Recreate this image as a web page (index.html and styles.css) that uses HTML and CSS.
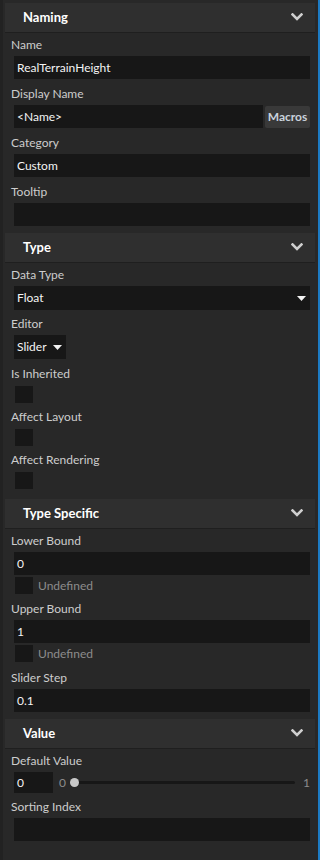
FILE: index.html
```html
<!DOCTYPE html>
<html>
<head>
<meta charset="utf-8">
<link rel="stylesheet" href="styles.css">
</head>
<body>
<div class="panel">
  <section class="group g-naming">
    <div class="group-head"><span class="group-title">Naming</span>
      <svg class="chev" width="12" height="8" viewBox="0 0 12 8"><path d="M1.5 1.5 L6 6 L10.5 1.5" fill="none" stroke="#cfcfcf" stroke-width="2.6" stroke-linecap="square"/></svg>
    </div>
    <div class="group-body">
      <div class="field first"><div class="label">Name</div><div class="input">RealTerrainHeight</div></div>
      <div class="field"><div class="label">Display Name</div>
        <div class="row"><div class="input grow">&lt;Name&gt;</div><div class="btn">Macros</div></div>
      </div>
      <div class="field"><div class="label">Category</div><div class="input">Custom</div></div>
      <div class="field"><div class="label">Tooltip</div><div class="input"></div></div>
    </div>
  </section>

  <section class="group g-type">
    <div class="group-head"><span class="group-title">Type</span>
      <svg class="chev" width="12" height="8" viewBox="0 0 12 8"><path d="M1.5 1.5 L6 6 L10.5 1.5" fill="none" stroke="#cfcfcf" stroke-width="2.6" stroke-linecap="square"/></svg>
    </div>
    <div class="group-body">
      <div class="field first"><div class="label">Data Type</div>
        <div class="input select">Float<svg class="tri" width="9" height="5" viewBox="0 0 9 5"><path d="M0 0 H9 L4.5 5 Z" fill="#f2f2f2"/></svg></div>
      </div>
      <div class="field f-editor"><div class="label">Editor</div>
        <div class="input select small">Slider<svg class="tri" width="9" height="5" viewBox="0 0 9 5"><path d="M0 0 H9 L4.5 5 Z" fill="#f2f2f2"/></svg></div>
      </div>
      <div class="field f-check f-first-check"><div class="label">Is Inherited</div><div class="check"></div></div>
      <div class="field f-check"><div class="label">Affect Layout</div><div class="check"></div></div>
      <div class="field f-check"><div class="label">Affect Rendering</div><div class="check"></div></div>
    </div>
  </section>

  <section class="group g-spec">
    <div class="group-head"><span class="group-title">Type Specific</span>
      <svg class="chev" width="12" height="8" viewBox="0 0 12 8"><path d="M1.5 1.5 L6 6 L10.5 1.5" fill="none" stroke="#cfcfcf" stroke-width="2.6" stroke-linecap="square"/></svg>
    </div>
    <div class="group-body">
      <div class="field first"><div class="label">Lower Bound</div><div class="input">0</div>
        <div class="undef"><div class="check"></div><span>Undefined</span></div>
      </div>
      <div class="field"><div class="label">Upper Bound</div><div class="input">1</div>
        <div class="undef"><div class="check"></div><span>Undefined</span></div>
      </div>
      <div class="field f-step"><div class="label">Slider Step</div><div class="input">0.1</div></div>
    </div>
  </section>

  <section class="group g-value">
    <div class="group-head"><span class="group-title">Value</span>
      <svg class="chev" width="12" height="8" viewBox="0 0 12 8"><path d="M1.5 1.5 L6 6 L10.5 1.5" fill="none" stroke="#cfcfcf" stroke-width="2.6" stroke-linecap="square"/></svg>
    </div>
    <div class="group-body">
      <div class="field first"><div class="label">Default Value</div>
        <div class="slider-row">
          <div class="input numbox">0</div>
          <span class="sl-min">0</span>
          <div class="track"><div class="thumb"></div></div>
          <span class="sl-max">1</span>
        </div>
      </div>
      <div class="field f-sort"><div class="label">Sorting Index</div><div class="input"></div></div>
    </div>
  </section>
</div>
</body>
</html>
```

FILE: styles.css
```css
html, body {
  margin: 0;
  padding: 0;
  background: #282828;
}
body {
  font-family: "Lato", "Liberation Sans", sans-serif;
  font-size: 12px;
  color: #c8c8c8;
}
.panel {
  width: 320px;
  height: 860px;
  box-sizing: border-box;
  border-left: 3px solid #222222;
  border-right: 2px solid #1c7bc4;
  padding: 3px 3px 0 2px;
  background: #282828;
}
.group-head {
  height: 30px;
  box-sizing: border-box;
  background: #2f2f2f;
  border-bottom: 1px solid #1f1f1f;
  display: flex;
  align-items: center;
  justify-content: space-between;
  padding: 0 12px 1px 18px;
}
.group-title {
  font-weight: 700;
  font-size: 13px;
  color: #ffffff;
}
.chev { display: block; }
.group-body {
  padding: 0 5px 7px 6px;
}
.g-type .group-body { padding-bottom: 10px; }
.g-spec .group-body { padding-bottom: 7px; }
.field { margin-top: 6px; }
.field.first { margin-top: 3px; }
.label {
  height: 17px;
  line-height: 17px;
  color: #cdcdcd;
}
.input {
  margin: 3px 0 0 3px;
  height: 23px;
  box-sizing: border-box;
  background: #171717;
  color: #f4f4f4;
  line-height: 23px;
  padding-left: 3px;
  white-space: nowrap;
}
.row {
  display: flex;
  align-items: center;
  margin-top: 3px;
}
.row .input { margin-top: 0; }
.grow { flex: 1; }
.btn {
  margin-left: 2px;
  width: 45px;
  height: 22px;
  box-sizing: border-box;
  background: #393939;
  border-radius: 2px;
  color: #c9d2dc;
  font-weight: 700;
  font-size: 12px;
  display: flex;
  align-items: center;
  justify-content: center;
}
.select {
  height: 24px;
  line-height: 24px;
  display: flex;
  align-items: center;
  justify-content: space-between;
  padding-right: 4px;
}
.select.small { width: 52px; }
.f-editor { margin-top: 5px; }
.tri { display: block; }
.check {
  width: 18px;
  height: 17px;
  background: #171717;
  margin: 4px 0 0 4px;
}
.f-check { margin-top: 5px; }
.f-check.f-first-check { margin-top: 6px; }
.undef {
  display: flex;
  align-items: center;
  margin-top: 2px;
  height: 17px;
}
.undef .check { margin: 0 0 0 4px; }
.undef span {
  margin-left: 5px;
  color: #8c8c8c;
}
.f-step { margin-top: 7px; }
.slider-row {
  display: flex;
  align-items: center;
  margin-top: 3px;
}
.numbox {
  margin: 0 0 0 3px;
  width: 39px;
  height: 21px;
  line-height: 21px;
}
.sl-min {
  margin-left: 6px;
  color: #8c8c8c;
}
.track {
  position: relative;
  flex: 1;
  height: 3px;
  background: #171717;
  margin-left: 6px;
  border-radius: 2px;
}
.thumb {
  position: absolute;
  left: -2px;
  top: -3px;
  width: 9px;
  height: 9px;
  border-radius: 50%;
  background: #c8c8c8;
}
.sl-max {
  margin-left: 8px;
  color: #8c8c8c;
}
.f-sort { margin-top: 5px; }
```
